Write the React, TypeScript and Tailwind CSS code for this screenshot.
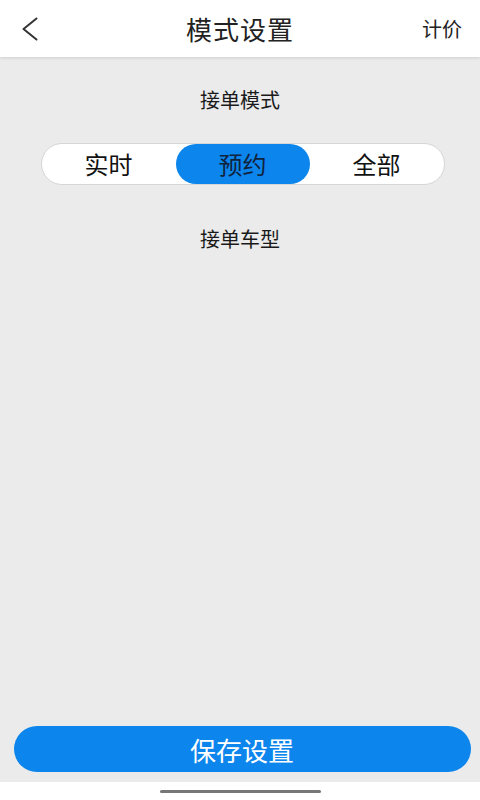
const modes = ["实时", "预约", "全部"];

export default function App() {
  const active = 1;

  return (
    <div
      className="flex h-[800px] w-[480px] flex-col bg-[#ebebeb] text-[#1a1a1a]"
      style={{ fontFamily: '"Noto Sans CJK SC", "Noto Sans", sans-serif' }}
    >
      {/* header */}
      <div className="relative z-10 flex h-[57px] shrink-0 items-center justify-between bg-white pl-[22px] pr-[18px] shadow-[0_1px_3px_rgba(0,0,0,0.12)]">
        <svg width="16" height="24" viewBox="0 0 16 24" fill="none">
          <polyline
            points="14.5,1.5 1.5,12 14.5,22.5"
            stroke="#333"
            strokeWidth="2"
            strokeLinecap="round"
            strokeLinejoin="round"
          />
        </svg>
        <span className="absolute left-1/2 -translate-x-1/2 text-[26px] leading-[32px] tracking-[1px] text-[#222]">模式设置</span>
        <span className="text-[20px] leading-[28px] text-[#222]">计价</span>
      </div>

      <div className="flex flex-1 flex-col items-center">
        <div className="mt-[29px] text-[20px] leading-[28px]">接单模式</div>

        <div className="ml-[5px] mt-[29px] grid h-[42px] w-[404px] grid-cols-3 rounded-full border border-[#d6d6d6] bg-white">
          {modes.map((m, i) => (
            <div
              key={m}
              className={
                i === active
                  ? "flex items-center justify-center rounded-full bg-[#0c85ec] text-[24px] text-[#10233d]"
                  : "flex items-center justify-center text-[24px] text-[#111]"
              }
            >
              {m}
            </div>
          ))}
        </div>

        <div className="mt-[40px] text-[20px] leading-[28px]">接单车型</div>

        <div className="flex-1" />

        <button className="mb-[10px] ml-[4px] flex h-[46px] w-[457px] items-center justify-center rounded-full bg-[#0c85ec] text-[26px] text-white">
          保存设置
        </button>
      </div>

      {/* home indicator */}
      <div className="flex h-[18px] shrink-0 items-center justify-center bg-white">
        <div className="h-[3px] w-[161px] rounded-full bg-[#777]" />
      </div>
    </div>
  );
}
